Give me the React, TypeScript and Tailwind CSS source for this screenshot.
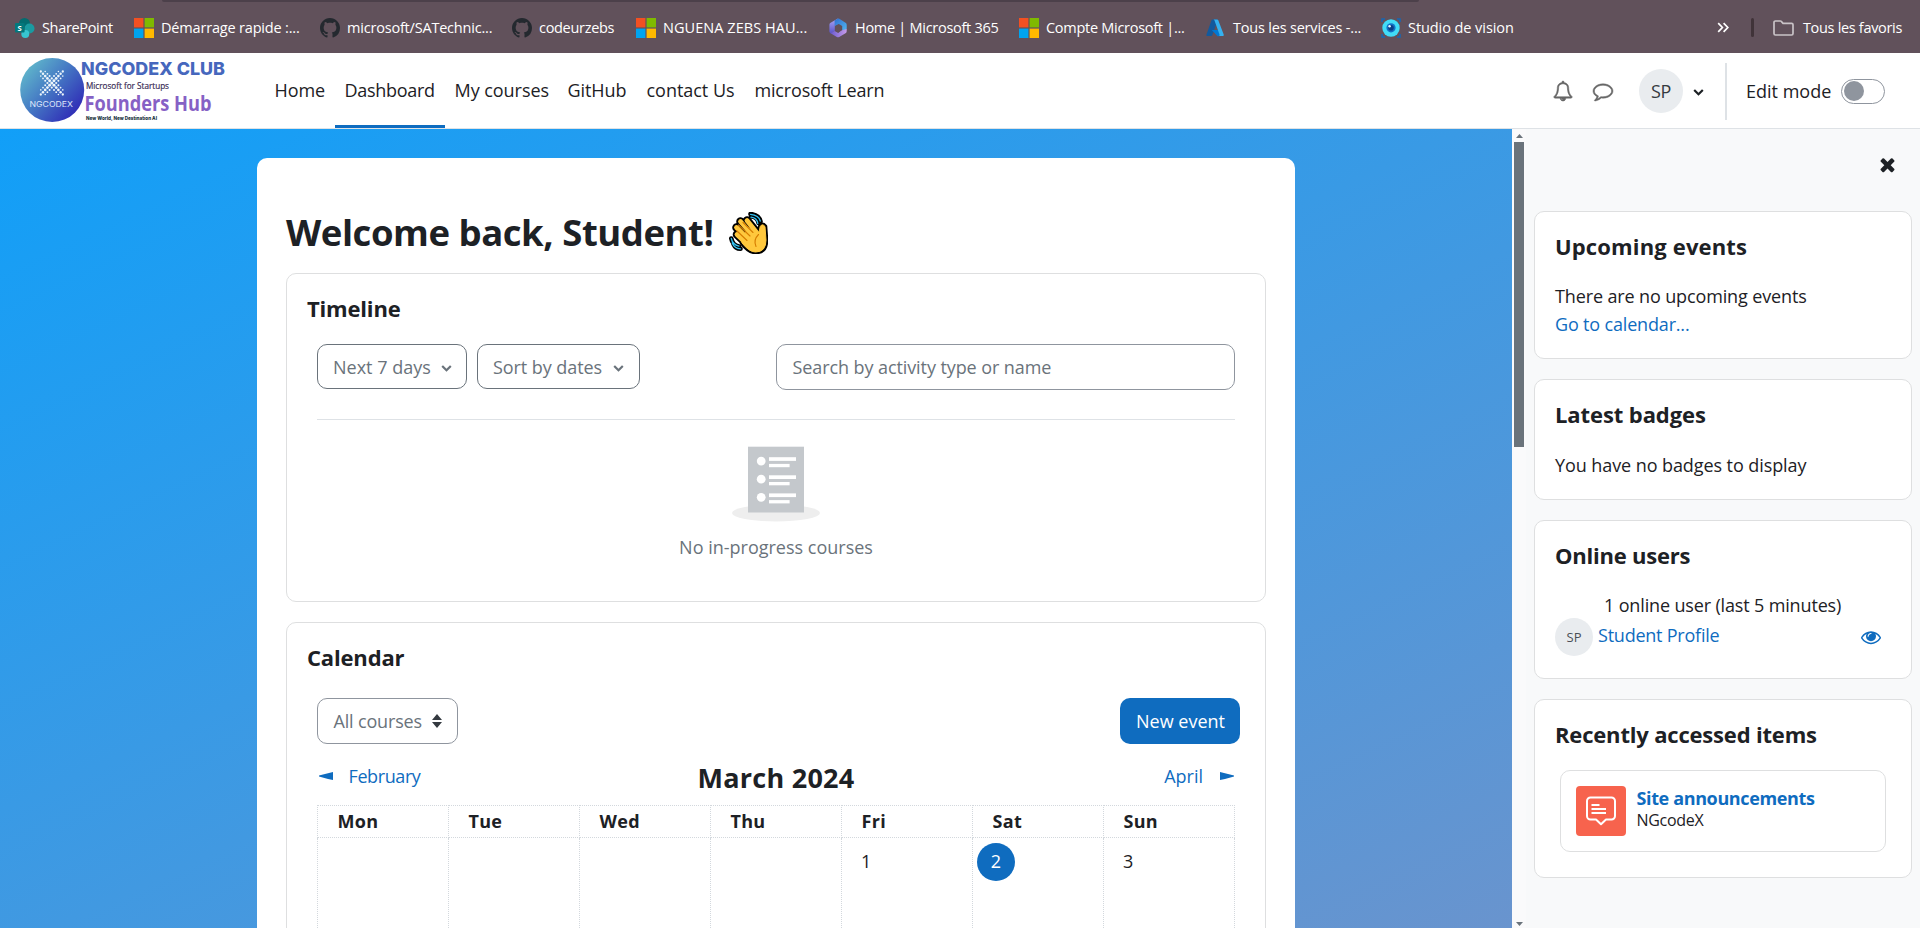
import React from "react";
import type { ReactNode } from "react";

const EYE =
  "M1664 960q-152-236-381-353 61 104 61 225 0 185-131.5 316.5t-316.5 131.5-316.5-131.5-131.5-316.5q0-121 61-225-229 117-381 353 133 205 333.5 326.5t434.5 121.5 434.5-121.5 333.5-326.5zm-720-384q0-20-14-34t-34-14q-125 0-214.5 89.5t-89.5 214.5q0 20 14 34t34 14 34-14 14-34q0-86 61-147t147-61q20 0 34-14t14-34zm848 384q0 34-20 69-140 230-376.5 368.5t-499.5 138.5-499.5-139-376.5-368q-20-35-20-69t20-69q140-229 376.5-368t499.5-139 499.5 139 376.5 368q20 35 20 69z";
const TIMES =
  "M1490 1322q0 40-28 68l-136 136q-28 28-68 28t-68-28l-294-294-294 294q-28 28-68 28t-68-28l-136-136q-28-28-28-68t28-68l294-294-294-294q-28-28-28-68t28-68l136-136q28-28 68-28t68 28l294 294 294-294q28-28 68-28t68 28l136 136q28 28 28 68t-28 68l-294 294 294 294q28 28 28 68z";
const COMMENT =
  "M896 384q-204 0-381.5 69.5t-282 187.5-104.5 255q0 112 71.5 213.5t201.5 175.5l87 50-27 96q-24 91-70 172 152-63 275-171l43-38 57 6q69 8 130 8 204 0 381.5-69.5t282-187.5 104.5-255-104.5-255-282-187.5-381.5-69.5zm896 512q0 174-120 321.5t-326 233-450 85.5q-70 0-145-8-198 175-460 242-49 14-114 22h-5q-15 0-27-10.5t-16-27.5v-1q-3-4-.5-12t2-10 4.5-9.5l6-9 7-8.5 8-9q7-8 31-34.5t34.5-38 31-39.5 32.5-51 27-59 26-76q-157-89-247.5-220t-90.5-281q0-174 120-321.5t326-233 450-85.5 450 85.5 326 233 120 321.5z";
const BELL =
  "M912 1696q0-16-16-16-59 0-101.5-42.5t-42.5-101.5q0-16-16-16t-16 16q0 73 51.5 124.5t124.5 51.5q16 0 16-16zm-666-288h1300q-266-300-266-832 0-51-24-105t-69-103-121.5-80.5-169.5-31.5-169.5 31.5-121.5 80.5-69 103-24 105q0 532-266 832zm1482 0q0 52-38 90t-90 38h-448q0 106-75 181t-181 75-181-75-75-181h-448q-52 0-90-38t-38-90q50-42 91-88t85-119.5 74.5-158.5 50-206 19.5-260q0-152 117-282.5t307-158.5q-8-19-8-39 0-40 28-68t68-28 68 28 28 68q0 20-8 39 190 28 307 158.5t117 282.5q0 139 19.5 260t50 206 74.5 158.5 85 119.5 91 88z";
const CHEVRON =
  "M1683 808l-742 741q-19 19-45 19t-45-19l-742-741q-19-19-19-45.5t19-45.5l166-165q19-19 45-19t45 19l531 531 531-531q19-19 45-19t45 19l166 165q19 19 19 45.5t-19 45.5z";

function Glyph({ d, className, weight = 0 }: { d: string; className: string; weight?: number }) {
  return (
    <svg viewBox="0 0 1792 1792" fill="currentColor" stroke="currentColor" strokeWidth={weight} className={`shrink-0 overflow-visible ${className}`}>
      <path d={d} />
    </svg>
  );
}

const SharePointIcon = () => (
  <svg viewBox="0 0 20 20" className="h-5 w-5">
    <circle cx="9.5" cy="5.5" r="5.5" fill="#036c70" />
    <circle cx="14.5" cy="10.5" r="5" fill="#1a9ba1" />
    <circle cx="10.3" cy="16" r="4" fill="#37c6d0" />
    <rect x="0" y="5" width="9.6" height="9.6" rx="1" fill="#03787c" />
    <text x="2.4" y="12.6" fontSize="7.6" fontWeight="700" fill="#fff" fontFamily="Open Sans, sans-serif">
      S
    </text>
  </svg>
);

const MicrosoftIcon = () => (
  <svg viewBox="0 0 20 20" className="h-5 w-5">
    <rect width="9.4" height="9.4" fill="#f25022" />
    <rect x="10.6" width="9.4" height="9.4" fill="#7fba00" />
    <rect y="10.6" width="9.4" height="9.4" fill="#00a4ef" />
    <rect x="10.6" y="10.6" width="9.4" height="9.4" fill="#ffb900" />
  </svg>
);

const GithubIcon = () => (
  <svg viewBox="0 0 16 16" className="h-5 w-5" fill="#24292f">
    <path d="M8 0C3.58 0 0 3.58 0 8c0 3.54 2.29 6.53 5.47 7.59.4.07.55-.17.55-.38 0-.19-.01-.82-.01-1.49-2.01.37-2.53-.49-2.69-.94-.09-.23-.48-.94-.82-1.13-.28-.15-.68-.52-.01-.53.63-.01 1.08.58 1.23.82.72 1.21 1.87.87 2.33.66.07-.52.28-.87.51-1.07-1.78-.2-3.64-.89-3.64-3.95 0-.87.31-1.59.82-2.15-.08-.2-.36-1.02.08-2.12 0 0 .67-.21 2.2.82.64-.18 1.32-.27 2-.27s1.36.09 2 .27c1.53-1.04 2.2-.82 2.2-.82.44 1.1.16 1.92.08 2.12.51.56.82 1.27.82 2.15 0 3.07-1.87 3.75-3.65 3.95.29.25.54.73.54 1.48 0 1.07-.01 1.93-.01 2.2 0 .21.15.46.55.38A8.01 8.01 0 0 0 16 8c0-4.42-3.58-8-8-8z" />
  </svg>
);

const M365Icon = () => (
  <svg viewBox="0 0 20 20" className="h-5 w-5">
    <defs>
      <linearGradient id="m1" x1="0" y1="0" x2="0" y2="1">
        <stop offset="0" stopColor="#a9a6f5" />
        <stop offset="1" stopColor="#5a52c7" />
      </linearGradient>
      <linearGradient id="m2" x1="0" y1="0" x2="1" y2="1">
        <stop offset="0" stopColor="#2f6fd0" />
        <stop offset="1" stopColor="#52b8f2" />
      </linearGradient>
      <linearGradient id="m3" x1="0" y1="0" x2="1" y2="0">
        <stop offset="0" stopColor="#6c5bd0" />
        <stop offset="1" stopColor="#c79be8" />
      </linearGradient>
    </defs>
    <path d="M10 .6 2.6 4.8a2.4 2.4 0 0 0-1.200 2v6.500c0 1 .6 1.800 1.400 2.200L6.800 13V7.800L12 4.500z" fill="url(#m1)" />
    <path d="M10 .5 6.600 2.500 6.600 8l4.200-2 3.400 2v5.200l3.600-1.200a2 2 0 0 0 .9-1.600V6.800a2.400 2.400 0 0 0-1.200-2L11.300.8A2 2 0 0 0 10 .5z" fill="url(#m2)" />
    <path d="M2.600 15.300 8.800 19a2.400 2.400 0 0 0 2.400 0l6.300-3.700a2.400 2.400 0 0 0 1.200-2V11l-5.500 1.500L10.200 15 6.600 13z" fill="url(#m3)" />
    <path d="m10.300 6.600 3.200 1.800v4L10.300 14.300 7.300 12.500v-4z" fill="#61515b" />
  </svg>
);

const AzureIcon = () => (
  <svg viewBox="0 0 20 20" className="h-5 w-5">
    <path d="M6.500 1.500h5.300L6.300 17.200a1.200 1.200 0 0 1-1.100.8H1.500a1 1 0 0 1-1-1.400L5.500 2.300a1.200 1.200 0 0 1 1-.8z" fill="#125a9e" />
    <path d="M5.800 12h8.500l1.500 6-4.300.3z" fill="#0078d4" />
    <path d="M12.300 2.300a1.200 1.200 0 0 0-1.100-.8h-4c.6 0 1 .3 1.200.8l5.100 14.300a1 1 0 0 1-1 1.400h4.200a1 1 0 0 0 1-1.400z" fill="#35b1f0" />
  </svg>
);

const VisionIcon = () => (
  <svg viewBox="0 0 20 20" className="h-5 w-5">
    <path d="M1 4V1h3M16 1h3v3M19 16v3h-3M4 19H1v-3" fill="none" stroke="#1667b5" strokeWidth="1.500" />
    <circle cx="10" cy="10" r="8.700" fill="#41dcf7" />
    <circle cx="10" cy="9.800" r="4.600" fill="#1270c4" />
    <circle cx="10" cy="9.800" r="2.800" fill="#0a3f86" />
    <circle cx="8.600" cy="8.300" r="1.200" fill="#e8fbff" />
  </svg>
);

const bookmarks: { icon: ReactNode; label: string; cls: string }[] = [
  { icon: <SharePointIcon />, label: "SharePoint", cls: "w-[119px] tracking-[-0.33px]" },
  { icon: <MicrosoftIcon />, label: "Démarrage rapide :...", cls: "w-[186px] tracking-[-0.18px]" },
  { icon: <GithubIcon />, label: "microsoft/SATechnic...", cls: "w-[192px] tracking-[-0.2px]" },
  { icon: <GithubIcon />, label: "codeurzebs", cls: "w-[124px] tracking-[-0.31px]" },
  { icon: <MicrosoftIcon />, label: "NGUENA ZEBS HAU...", cls: "w-[192px] tracking-[0.06px]" },
  { icon: <M365Icon />, label: "Home | Microsoft 365", cls: "w-[191px] tracking-[-0.28px]" },
  { icon: <MicrosoftIcon />, label: "Compte Microsoft |...", cls: "w-[187px] tracking-[-0.28px]" },
  { icon: <AzureIcon />, label: "Tous les services -...", cls: "w-[175px] tracking-[-0.2px]" },
  { icon: <VisionIcon />, label: "Studio de vision", cls: "w-[160px] tracking-[-0.07px]" },
];

function BookmarksBar() {
  return (
    <div className="h-[53px] bg-[#61515b] text-[14.5px] text-white">
      <div className="ml-[162px] h-[2px] w-[1257px] rounded-b bg-[#4c404a]" />
      <div className="flex h-[51px] items-center pl-[15px] pr-[18px]">
        {bookmarks.map((b, i) => (
          <div key={i} className={`flex shrink-0 items-center gap-[7px] ${b.cls}`}>
            <span className="w-5 shrink-0">{b.icon}</span>
            <span>{b.label}</span>
          </div>
        ))}
        <div className="ml-auto flex items-center">
          <svg viewBox="0 0 12 10" className="h-[11px] w-[12px]" fill="none" stroke="#fff" strokeWidth="1.7">
            <path d="M1.200.7 5.400 5 1.200 9.300M6.600.7 10.800 5 6.600 9.300" />
          </svg>
          <span className="ml-[22px] h-[19px] w-[3px] rounded bg-[#403339]" />
          <svg viewBox="0 0 21 16" className="ml-[19px] h-[16px] w-[21px]" fill="none" stroke="#c9c3c7" strokeWidth="1.700">
            <path d="M1 13.600V2.400C1 1.600 1.600 1 2.400 1h4.900c.5 0 .9.200 1.200.6L10 3.400h8.600c.8 0 1.400.6 1.400 1.400v8.800c0 .8-.6 1.400-1.400 1.400H2.400c-.8 0-1.400-.6-1.400-1.400z" />
          </svg>
          <span className="ml-[9px] tracking-[-0.32px]">Tous les favoris</span>
        </div>
      </div>
    </div>
  );
}

const logoDots = (() => {
  const out: { x: number; y: number; r: number }[] = [];
  for (let i = 0; i < 11; i++) {
    for (let j = 0; j < 11; j++) {
      const u = i - 5;
      const v = j - 5;
      const off = Math.abs(Math.abs(u) - Math.abs(v));
      const dist = Math.max(Math.abs(u), Math.abs(v));
      if ((i + j) % 2 === 0 && off <= 2) {
        out.push({ x: 51.8 + u * 2.2, y: 30 + v * 2.3, r: off === 0 ? 1.55 - dist * 0.08 : 1.3 - dist * 0.1 });
      }
    }
  }
  return out;
})();

function Logo() {
  return (
    <svg width="240" height="75" viewBox="0 0 240 75" className="shrink-0">
      <defs>
        <linearGradient id="ball" x1="0.1" y1="0.15" x2="0.9" y2="0.85">
          <stop offset="0" stopColor="#5fb5cb" />
          <stop offset="0.45" stopColor="#4579c4" />
          <stop offset="1" stopColor="#2f2bb6" />
        </linearGradient>
      </defs>
      <circle cx="52.200" cy="37" r="32" fill="url(#ball)" />
      {logoDots.map((d, i) => (
        <circle key={i} cx={d.x} cy={d.y} r={d.r} fill="#eef6fb" />
      ))}
      <text x="29.500" y="54" fontSize="7.600" fill="#dfe6fa" fontFamily="Inter, sans-serif" textLength="43.500" lengthAdjust="spacingAndGlyphs">
        NGCODEX
      </text>
      <text x="81" y="22.200" fontSize="17.400" fontWeight="800" fill="#4667bd" fontFamily="Inter, sans-serif" textLength="144" lengthAdjust="spacingAndGlyphs">
        NGCODEX CLUB
      </text>
      <text x="86" y="35.500" fontSize="9" fill="#3a2c55" stroke="#3a2c55" strokeWidth="0.2" fontFamily="Open Sans, sans-serif" textLength="83" lengthAdjust="spacingAndGlyphs">
        Microsoft for Startups
      </text>
      <text x="84.500" y="57.500" fontSize="20.500" fontWeight="700" fill="#8661c5" fontFamily="Open Sans, sans-serif" textLength="127" lengthAdjust="spacingAndGlyphs">
        Founders Hub
      </text>
      <text x="86" y="66.600" fontSize="5" fontWeight="800" fill="#16323c" fontFamily="Inter, sans-serif" textLength="71" lengthAdjust="spacingAndGlyphs">
        New World, New Destination AI
      </text>
    </svg>
  );
}

const navItems = [
  { label: "Home", cls: "w-[70px] tracking-[-0.09px]" },
  { label: "Dashboard", cls: "w-[110px] tracking-[-0.3px]", active: true },
  { label: "My courses", cls: "w-[113px] tracking-[-0.05px]" },
  { label: "GitHub", cls: "w-[79px] tracking-[-0.07px]" },
  { label: "contact Us", cls: "w-[108px] tracking-[-0.03px]" },
  { label: "microsoft Learn", cls: "w-[149px] tracking-[-0.17px]" },
];

function Header() {
  return (
    <header className="flex h-[76px] border-b border-[#dee2e6] bg-white pr-[35px] text-[18px] text-[#1d2125]">
      <Logo />
      <nav className="ml-[25px] flex h-[75px]">
        {navItems.map((n) => (
          <div key={n.label} className={`flex flex-col ${n.cls}`}>
            <span className="flex flex-1 items-center pl-[9.5px] pt-[3px]">{n.label}</span>
            <span className={n.active ? "h-[3px] bg-[#0f6cbf]" : "h-[3px]"} />
          </div>
        ))}
      </nav>
      <div className="ml-auto flex h-[75px] items-center pt-px">
        <Glyph d={BELL} weight={45} className="h-[20px] w-[20px] text-[#666]" />
        <Glyph d={COMMENT} weight={45} className="ml-[20px] h-[20px] w-[20px] text-[#666]" />
        <span className="ml-[26px] flex h-[44px] w-[44px] items-center justify-center rounded-full bg-[#e9ecef] text-[18px] tracking-[-0.3px] text-[#343a40]">
          SP
        </span>
        <Glyph d={CHEVRON} className="ml-[10px] h-[11px] w-[11px]" />
        <span className="ml-[21px] h-[57px] w-[2px] bg-[#dee2e6]" />
        <span className="ml-[19px] w-[95px]">Edit mode</span>
        <span className="flex h-[25px] w-[44px] items-center rounded-full border border-[#8f959e] bg-white pl-[2px]">
          <span className="h-[20px] w-[20px] rounded-full bg-[#8f959e]" />
        </span>
      </div>
    </header>
  );
}

function WavingHand() {
  const fingers = "M18 8.500 28 21M11.500 9.500 24 24M7.500 15.500 20 28M8 22.500 19 33";
  const palm = "M19 15 29.500 22.500 31.200 14.500Q33.200 11.200 36 14.500L37 28Q37 40 26.500 40 20 40 13 31z";
  return (
    <svg viewBox="0 0 39 42" className="h-[42px] w-[39px]" strokeLinecap="round" strokeLinejoin="round" fill="none">
      <path d="M22 4.500Q28.500 4.500 29.500 11M21.500 2Q30 3 31.500 9.500" stroke="#000" strokeWidth="4.600" />
      <path d="M2.300 26.500Q3.300 33 10 34.500M4.500 32Q6.500 36.500 11.500 36.800" stroke="#000" strokeWidth="4.600" />
      <path d={fingers} stroke="#000" strokeWidth="8.600" />
      <path d={palm} stroke="#000" strokeWidth="4.600" fill="#000" />
      <path d={fingers} stroke="#ffc83d" strokeWidth="4.800" />
      <path d={palm} stroke="#ffc83d" strokeWidth="1" fill="#ffc83d" />
      <path d="M14 10.500 24 20.500M9.500 13 21 24M7.500 18.500 18 28.500M29.500 22.500Q24 28 27 34.500" stroke="#d67d00" strokeWidth="1.100" />
      <path d="M22 5.200Q28 5.800 28.800 11.500M21.500 2.300Q29.800 3 31.300 9" stroke="#35c1f1" strokeWidth="1.300" />
      <path d="M2.300 26.500Q3.500 32.500 10 34.200M3.200 31Q5.500 36.500 11.500 36.800" stroke="#35c1f1" strokeWidth="1.300" />
    </svg>
  );
}

function EmptyList() {
  return (
    <svg viewBox="0 0 88 76" className="h-[76px] w-[88px]">
      <ellipse cx="44" cy="67" rx="44" ry="8.400" fill="#eee" />
      <rect x="16" y="0.700" width="56" height="65.800" fill="#c4c8cc" />
      {[0, 18.1, 36.2].map((y) => (
        <g key={y} fill="#fff">
          <circle cx="29.200" cy={15.1 + y} r="4.400" />
          <rect x="37" y={11.2 + y} width="27" height="3.700" />
          <rect x="37" y={17.9 + y} width="20.600" height="3.300" />
        </g>
      ))}
    </svg>
  );
}

const outline = "flex items-center rounded-[10px] border text-[18px] text-[#6a737b]";

function Timeline() {
  return (
    <section className="h-[329px] rounded-[10px] border border-[#dedfe0] pt-[21px]">
      <h2 className="pl-[20px] text-[22px] leading-[26px] font-bold tracking-[-0.18px]">Timeline</h2>
      <div className="mx-[30px] mt-[23px] flex h-[46px] items-start">
        <div className={`${outline} h-[45px] w-[150px] border-[#6a737b] pt-px pl-[15px]`}>
          <span className="w-[108px]">Next 7 days</span>
          <Glyph d={CHEVRON} className="h-[11px] w-[11px]" />
        </div>
        <div className={`${outline} ml-[10px] h-[45px] w-[163px] border-[#6a737b] pt-px pl-[15px] tracking-[-0.07px]`}>
          <span className="w-[120px]">Sort by dates</span>
          <Glyph d={CHEVRON} className="h-[11px] w-[11px]" />
        </div>
        <div className={`${outline} ml-auto h-[46px] w-[459px] border-[#8f959e] pl-[15.5px] tracking-[-0.09px]`}>
          Search by activity type or name
        </div>
      </div>
      <div className="mx-[30px] mt-[29px] h-px bg-[#dee2e6]" />
      <div className="mt-[26px] flex flex-col items-center">
        <EmptyList />
        <p className="mt-[11px] text-[18px] leading-[28px] text-[#6a737b]">No in-progress courses</p>
      </div>
    </section>
  );
}

const days = ["Mon", "Tue", "Wed", "Thu", "Fri", "Sat", "Sun"];
const firstWeek = ["", "", "", "", "1", "2", "3"];

function Calendar() {
  return (
    <section className="h-[400px] rounded-t-[10px] border border-[#dedfe0] pt-[21px]">
      <h2 className="pl-[20px] text-[22px] leading-[26px] font-bold tracking-[-0.17px]">Calendar</h2>
      <div className="mt-[28px] mr-[25px] ml-[30px] flex justify-between">
        <div className={`${outline} h-[46px] w-[141px] border-[#8f959e] pl-[15.5px] tracking-[-0.17px]`}>
          <span className="w-[98px]">All courses</span>
          <svg viewBox="0 0 10 14" className="h-[14px] w-[10px]" fill="#343a40">
            <path d="M5 0 10 6H0zM5 14 0 8h10z" />
          </svg>
        </div>
        <div className="flex h-[46px] w-[120px] items-center justify-center rounded-[10px] bg-[#0f6cbf] pl-px text-[18px] text-white">
          New event
        </div>
      </div>
      <div className="mx-[30px] grid h-[61px] grid-cols-3 items-center text-[18px] text-[#0f6cbf]">
        <div className="flex items-center pt-[3px]">
          <svg viewBox="0 0 14 8" className="ml-[2px] h-[8px] w-[14px]" fill="currentColor">
            <path d="M14 0v8L9 7 0 4.500v-1L9 1.200z" />
          </svg>
          <span className="ml-[15.5px] tracking-[-0.4px]">February</span>
        </div>
        <h3 className="pt-[8px] text-center text-[27px] font-bold tracking-[0.25px] text-[#1d2125]">March 2024</h3>
        <div className="flex items-center justify-end pt-[3px]">
          <span>April</span>
          <svg viewBox="0 0 14 8" className="mr-[1px] ml-[17px] h-[8px] w-[14px]" fill="currentColor">
            <path d="M0 0v8l5-1 9-2.500v-1L5 1.200z" />
          </svg>
        </div>
      </div>
      <table className="ml-[30px] w-[918px] table-fixed border-collapse text-left text-[18px]">
        <thead>
          <tr className="h-[32px]">
            {days.map((d) => (
              <th key={d} className="border border-dotted border-[#d3d8dd] pt-0 pb-[2px] pl-[19.5px] leading-[28px] font-bold tracking-[0.3px]">
                {d}
              </th>
            ))}
          </tr>
        </thead>
        <tbody>
          <tr className="h-[120px]">
            {firstWeek.map((d, i) => (
              <td key={i} className="border border-dotted border-[#d3d8dd] pt-[5px] align-top leading-[37px]">
                {d === "2" ? (
                  <div className="ml-[4px] h-[38px] w-[38px] rounded-full bg-[#0f6cbf] text-center text-white">{d}</div>
                ) : (
                  <div className="pl-[19px]">{d}</div>
                )}
              </td>
            ))}
          </tr>
        </tbody>
      </table>
    </section>
  );
}

function Scrollbar() {
  return (
    <div className="flex w-[14px] shrink-0 flex-col items-center bg-[#fafafb]">
      <svg viewBox="0 0 7 4" className="mt-[5px] h-[4px] w-[7px]" fill="#6a737b">
        <path d="M3.500 0 7 4H0z" />
      </svg>
      <div className="mt-[4px] h-[305px] w-[10px] bg-[#6a737b]" />
      <svg viewBox="0 0 7 4" className="mt-auto mb-[2px] h-[4px] w-[7px]" fill="#6a737b">
        <path d="M0 0h7L3.500 4z" />
      </svg>
    </div>
  );
}

function Block({ title, className, titleClass, children }: { title: string; className: string; titleClass: string; children: ReactNode }) {
  return (
    <section className={`rounded-[10px] border border-[#dedfe0] bg-white pt-[21px] pl-[20px] ${className}`}>
      <h2 className={`text-[22px] leading-[26px] font-bold ${titleClass}`}>{title}</h2>
      {children}
    </section>
  );
}

function Drawer() {
  return (
    <aside className="flex flex-1 flex-col bg-[#f8f9fa] px-[8px] text-[18px] leading-[28px]">
      <div className="flex h-[82px] shrink-0 justify-end pt-[25px] pr-[14px]">
        <Glyph d={TIMES} className="h-[21px] w-[21px]" />
      </div>
      <div className="flex flex-col gap-[20px]">
        <Block title="Upcoming events" className="h-[148px]" titleClass="tracking-[0.15px]">
          <p className="mt-[23px] tracking-[-0.13px]">There are no upcoming events</p>
          <p className="tracking-[-0.17px] text-[#0f6cbf]">Go to calendar...</p>
        </Block>
        <Block title="Latest badges" className="h-[121px]" titleClass="tracking-[-0.09px]">
          <p className="mt-[24px] tracking-[-0.08px]">You have no badges to display</p>
        </Block>
        <Block title="Online users" className="h-[159px]" titleClass="tracking-[-0.22px]">
          <p className="mt-[23px] pl-[49px] tracking-[-0.15px]">1 online user (last 5 minutes)</p>
          <div className="-mt-px flex items-center pr-[30px]">
            <span className="flex h-[38px] w-[38px] items-center justify-center rounded-full bg-[#e9ecef] text-[13px] text-[#495057]">SP</span>
            <span className="ml-[5px] pb-[4px] tracking-[-0.23px] text-[#0f6cbf]">Student Profile</span>
            <Glyph d={EYE} className="ml-auto h-[20px] w-[20px] text-[#0f6cbf]" />
          </div>
        </Block>
        <Block title="Recently accessed items" className="h-[179px]" titleClass="tracking-[-0.18px]">
          <div className="mt-[23px] ml-[5px] flex h-[82px] w-[326px] items-center rounded-[10px] border border-[#dedfe0] pl-[15px]">
            <span className="flex h-[50px] w-[50px] items-center justify-center rounded-[4px] bg-[#f7634d]">
              <svg viewBox="0 0 30 30" className="h-[30px] w-[30px]" fill="none" stroke="#fff" strokeLinejoin="round">
                <path d="M4.500 1.500h21a3.500 3.500 0 0 1 3.500 3.500v15a3.500 3.500 0 0 1-3.500 3.500H20L15 28.300 10 23.500H4.500A3.500 3.500 0 0 1 1 20V5a3.500 3.500 0 0 1 3.500-3.500z" strokeWidth="2" />
                <path d="M5.500 9h8M5.500 13h14.500M5.500 17h14.500" strokeWidth="1.900" />
              </svg>
            </span>
            <div className="ml-[10.5px] pb-[7px]">
              <p className="leading-[24px] font-bold tracking-[-0.37px] text-[#0f6cbf]">Site announcements</p>
              <p className="text-[16px] leading-[20px] tracking-[-0.29px]">NGcodeX</p>
            </div>
          </div>
        </Block>
      </div>
    </aside>
  );
}

export default function App() {
  return (
    <div className="h-[928px] w-[1920px] overflow-hidden bg-white font-['Open_Sans','Noto_Sans',sans-serif] whitespace-nowrap text-[#1d2125]">
      <BookmarksBar />
      <Header />
      <div className="flex h-[799px]">
        <main className="w-[1512px] shrink-0 overflow-hidden bg-[linear-gradient(155deg,#119ff8_0%,#6994ce_100%)] pt-[29px] pl-[257px]">
          <div className="h-[800px] w-[1038px] rounded-t-[10px] bg-white px-[29px] pt-[52px]">
            <div className="mb-[18px] flex h-[45px] items-center">
              <h1 className="w-[443px] text-[36.5px] leading-[45px] font-bold tracking-[-0.46px]">Welcome back, Student!</h1>
              <WavingHand />
            </div>
            <div className="flex flex-col gap-[20px]">
              <Timeline />
              <Calendar />
            </div>
          </div>
        </main>
        <Scrollbar />
        <Drawer />
      </div>
    </div>
  );
}
